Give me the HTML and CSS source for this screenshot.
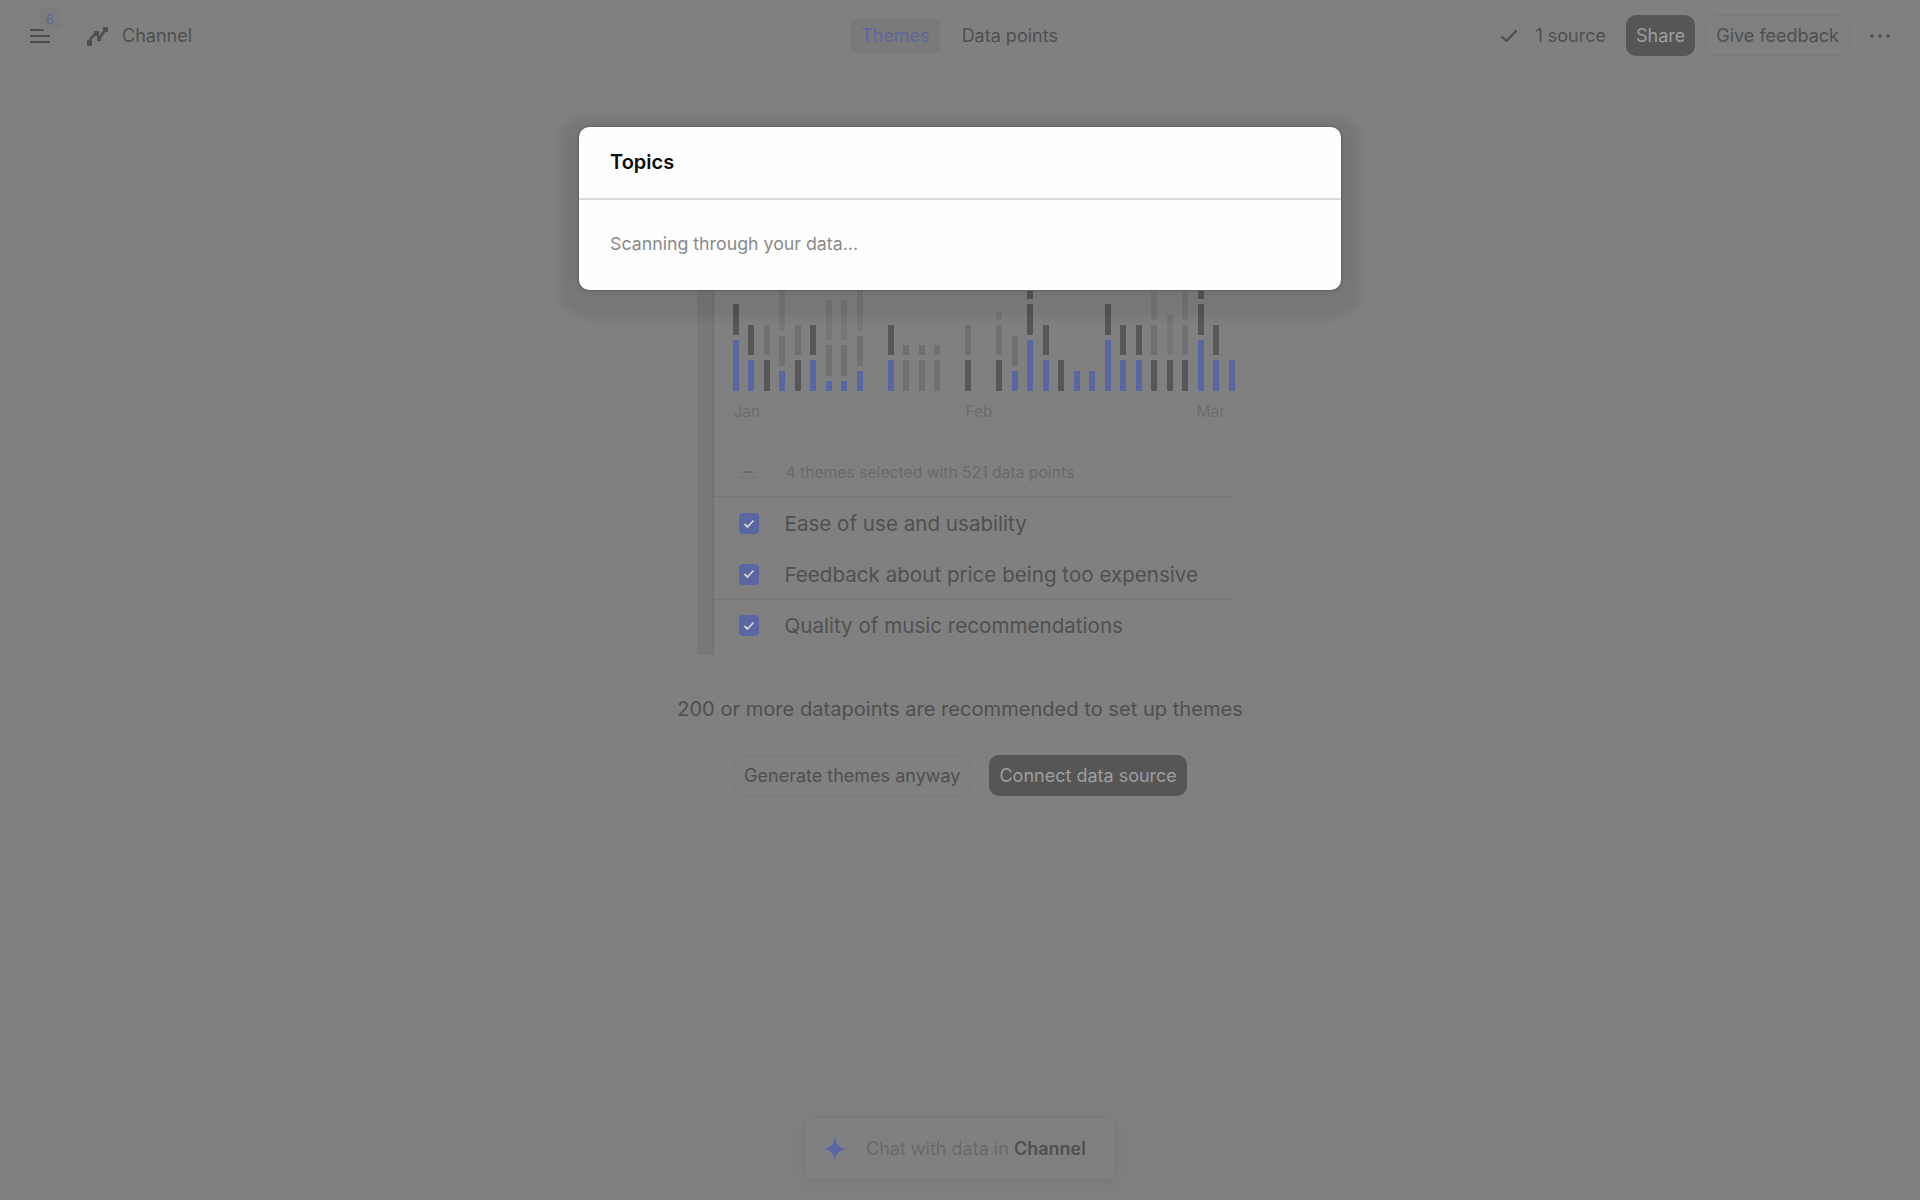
FILE: index.html
```html
<html>
<head>
<meta charset="utf-8">
<title>Channel</title>
<link rel="stylesheet" href="styles.css">
</head>
<body>
  <div class="page">
    <header class="topbar">
      <div class="bar-left">
        <span class="menu">
          <svg width="22" height="16" viewBox="0 0 22 16"><path d="M1 2h14M1 8h20M1 14h20" fill="none" stroke="#4d4d4d" stroke-width="2.2"/></svg>
          <span class="menu-badge">6</span>
        </span>
        <svg class="channel-icon" width="24" height="24" viewBox="0 0 24 24"><path d="M4 20 L6 14 L12 9 L14 15 L20 6" fill="none" stroke="#4f4f4f" stroke-width="2.6"/><path d="M2 16h5v6H2zM9 7h5v4H9zM12 13h4v4h-4zM18 3h5v5h-5z" fill="#4f4f4f"/></svg>
        <span class="channel-name">Channel</span>
      </div>
      <nav class="tabs">
        <span class="tab tab-active">Themes</span>
        <span class="tab">Data points</span>
      </nav>
      <div class="bar-right">
        <svg class="source-check" width="18" height="14" viewBox="0 0 18 14"><path d="M1.500 7.500 L6.500 12 L16.500 1.500" fill="none" stroke="#4f4f4f" stroke-width="2.2"/></svg>
        <span class="source-text">1 source</span>
        <span class="btn btn-dark btn-share">Share</span>
        <span class="btn btn-line btn-feedback">Give feedback</span>
        <svg class="dots" width="20" height="4" viewBox="0 0 20 4"><circle cx="2" cy="2" r="1.800" fill="#4f4f4f"/><circle cx="10" cy="2" r="1.800" fill="#4f4f4f"/><circle cx="18" cy="2" r="1.800" fill="#4f4f4f"/></svg>
      </div>
    </header>

    <main class="content">
      <section class="preview">
        <div class="chart">
          <div class="col"><i class="seg dark" style="height:31px"></i><i class="seg blue" style="height:51px"></i></div>
          <div class="col"><i class="seg dark" style="height:30px"></i><i class="seg blue" style="height:31px"></i></div>
          <div class="col"><i class="seg mid" style="height:30px"></i><i class="seg dark" style="height:31px"></i></div>
          <div class="col"><i class="seg light" style="height:42px"></i><i class="seg mid" style="height:30px"></i><i class="seg blue" style="height:20px"></i></div>
          <div class="col"><i class="seg mid" style="height:30px"></i><i class="seg dark" style="height:31px"></i></div>
          <div class="col"><i class="seg dark" style="height:30px"></i><i class="seg blue" style="height:31px"></i></div>
          <div class="col"><i class="seg light" style="height:40px"></i><i class="seg mid" style="height:31px"></i><i class="seg blue" style="height:10px"></i></div>
          <div class="col"><i class="seg light" style="height:40px"></i><i class="seg mid" style="height:31px"></i><i class="seg blue" style="height:10px"></i></div>
          <div class="col"><i class="seg light" style="height:42px"></i><i class="seg mid" style="height:30px"></i><i class="seg blue" style="height:20px"></i></div>
          <div class="col"></div>
          <div class="col"><i class="seg dark" style="height:30px"></i><i class="seg blue" style="height:31px"></i></div>
          <div class="col"><i class="seg mid" style="height:10px"></i><i class="seg mid" style="height:31px"></i></div>
          <div class="col"><i class="seg mid" style="height:10px"></i><i class="seg mid" style="height:31px"></i></div>
          <div class="col"><i class="seg mid" style="height:10px"></i><i class="seg mid" style="height:31px"></i></div>
          <div class="col"></div>
          <div class="col"><i class="seg mid" style="height:30px"></i><i class="seg dark" style="height:31px"></i></div>
          <div class="col"></div>
          <div class="col"><i class="seg light" style="height:9px"></i><i class="seg mid" style="height:30px"></i><i class="seg dark" style="height:31px"></i></div>
          <div class="col"><i class="seg mid" style="height:30px"></i><i class="seg blue" style="height:20px"></i></div>
          <div class="col"><i class="seg dark" style="height:8px"></i><i class="seg dark" style="height:31px"></i><i class="seg blue" style="height:51px"></i></div>
          <div class="col"><i class="seg dark" style="height:30px"></i><i class="seg blue" style="height:31px"></i></div>
          <div class="col"><i class="seg dark" style="height:31px"></i></div>
          <div class="col"><i class="seg blue" style="height:20px"></i></div>
          <div class="col"><i class="seg blue" style="height:20px"></i></div>
          <div class="col"><i class="seg dark" style="height:31px"></i><i class="seg blue" style="height:51px"></i></div>
          <div class="col"><i class="seg dark" style="height:30px"></i><i class="seg blue" style="height:31px"></i></div>
          <div class="col"><i class="seg dark" style="height:30px"></i><i class="seg blue" style="height:31px"></i></div>
          <div class="col"><i class="seg light" style="height:28px"></i><i class="seg mid" style="height:30px"></i><i class="seg dark" style="height:31px"></i></div>
          <div class="col"><i class="seg light" style="height:40px"></i><i class="seg dark" style="height:31px"></i></div>
          <div class="col"><i class="seg light" style="height:28px"></i><i class="seg mid" style="height:30px"></i><i class="seg dark" style="height:31px"></i></div>
          <div class="col"><i class="seg dark" style="height:8px"></i><i class="seg dark" style="height:31px"></i><i class="seg blue" style="height:51px"></i></div>
          <div class="col"><i class="seg dark" style="height:30px"></i><i class="seg blue" style="height:31px"></i></div>
          <div class="col"><i class="seg blue" style="height:31px"></i></div>
        </div>
        <div class="axis">
          <span>Jan</span>
          <span>Feb</span>
          <span>Mar</span>
        </div>
        <div class="summary">
          <span class="minus"></span>
          <span>4 themes selected with 521 data points</span>
        </div>
        <ul class="theme-list">
          <li class="theme">
            <span class="check"><svg width="12" height="10" viewBox="0 0 12 10"><path d="M1.500 5 L4.500 8 L10.500 1.500" fill="none" stroke="#d4d4d4" stroke-width="1.800"/></svg></span>
            Ease of use and usability
          </li>
          <li class="theme theme-ruled">
            <span class="check"><svg width="12" height="10" viewBox="0 0 12 10"><path d="M1.500 5 L4.500 8 L10.500 1.500" fill="none" stroke="#d4d4d4" stroke-width="1.800"/></svg></span>
            Feedback about price being too expensive
          </li>
          <li class="theme">
            <span class="check"><svg width="12" height="10" viewBox="0 0 12 10"><path d="M1.500 5 L4.500 8 L10.500 1.500" fill="none" stroke="#d4d4d4" stroke-width="1.800"/></svg></span>
            Quality of music recommendations
          </li>
        </ul>
      </section>

      <p class="notice">200 or more datapoints are recommended to set up themes</p>
      <div class="actions">
        <span class="btn btn-line">Generate themes anyway</span>
        <span class="btn btn-dark">Connect data source</span>
      </div>
    </main>

    <footer class="chat">
      <svg width="28" height="28" viewBox="0 0 28 28"><path d="M14 1 C15 10 18 13 27 14 C18 15 15 18 14 27 C13 18 10 15 1 14 C10 13 13 10 14 1 Z" fill="#5a66a8"/></svg>
      <span class="chat-text">Chat with data in <b>Channel</b></span>
    </footer>
  </div>

  <div class="modal">
    <div class="modal-head">Topics</div>
    <div class="modal-body">Scanning through your data...</div>
  </div>
</body>
</html>
```

FILE: styles.css
```css
* {
  box-sizing: border-box;
}

html, body {
  margin: 0;
  height: 100%;
}

body {
  background: #808080;
  color: #4f4f4f;
  font-family: Inter, "Liberation Sans", sans-serif;
  font-size: 18px;
  overflow: hidden;
}

.page {
  height: 1200px;
  display: flex;
  flex-direction: column;
}

/* top bar */
.topbar {
  height: 71px;
  display: grid;
  grid-template-columns: 1fr auto 1fr;
  align-items: center;
  padding: 0 30px 0 29px;
}

.bar-left {
  display: flex;
  align-items: center;
}

.menu {
  position: relative;
  display: flex;
  margin-top: 1px;
}

.menu-badge {
  position: absolute;
  top: -20px;
  left: 10px;
  width: 22px;
  height: 22px;
  text-align: center;
  font-size: 13px;
  line-height: 22px;
  color: #5f6499;
  background: #7c7c7c;
  border-radius: 6px;
}

.channel-icon {
  margin-left: 34px;
}

.channel-name {
  margin-left: 13px;
}

.tabs {
  display: flex;
  gap: 12px;
}

.tab {
  height: 38px;
  line-height: 38px;
  padding: 0 10px;
  border-radius: 8px;
}

.tab-active {
  background: #7a7a7a;
  color: #5f679f;
}

.bar-right {
  display: flex;
  align-items: center;
  justify-content: flex-end;
}

.source-text {
  margin-left: 17px;
  margin-right: 20px;
}

.btn {
  display: inline-block;
  height: 41px;
  line-height: 41px;
  padding: 0 10px;
  border-radius: 10px;
  white-space: nowrap;
}

.btn-dark {
  background: #565656;
  color: #9e9e9e;
}

.btn-line {
  border: 1px solid #7a7a7a;
  line-height: 39px;
}

.btn-feedback {
  margin-left: 10px;
}

.dots {
  margin-left: 20px;
}

/* chart and theme list behind the dialog */
.content {
  display: flex;
  flex-direction: column;
  align-items: center;
}

.preview {
  width: 521px;
  margin-top: 209px;
  margin-left: 26px;
  height: 375px;
  border-left: 1px solid #6e6e6e;
  box-shadow: -16px 0 0 #787878;
  background: #808080;
}

.chart {
  height: 111px;
  display: flex;
  align-items: flex-end;
  gap: 9.5px;
  padding-left: 19px;
}

.col {
  width: 6px;
  flex: none;
  display: flex;
  flex-direction: column;
  justify-content: flex-end;
  gap: 5px;
}

.seg {
  display: block;
}

.seg.blue {
  background: #5a669f;
}

.seg.dark {
  background: #575757;
}

.seg.mid {
  background: #707070;
}

.seg.light {
  background: #797573;
}

.axis {
  display: grid;
  grid-template-columns: 232px 231px auto;
  padding-left: 20px;
  margin-top: 12px;
  font-size: 15.5px;
  line-height: 18px;
  color: #6c6c6c;
}

.summary {
  height: 49px;
  margin-top: 27px;
  display: flex;
  align-items: center;
  gap: 28px;
  padding-left: 24px;
  font-size: 15.7px;
  color: #6a6a6a;
  border-bottom: 1px solid #777;
}

.minus {
  width: 20px;
  height: 2px;
  padding: 0 5px;
  background: #6a6a6a;
  background-clip: content-box;
  box-shadow: 0 6px 0 #7b7b7b;
}

.theme-list {
  list-style: none;
  margin: 1px 0 0;
  padding: 0;
}

.theme {
  height: 51px;
  display: flex;
  align-items: center;
  gap: 26px;
  padding-left: 25px;
  font-size: 20.6px;
  color: #505050;
}

.theme-ruled {
  border-bottom: 1px solid #777;
}

.check {
  width: 20px;
  height: 21px;
  display: flex;
  align-items: center;
  justify-content: center;
  background: #5a66a2;
  border-radius: 4px;
}

.notice {
  margin: 0;
  margin-top: 40px;
  font-size: 20.1px;
  line-height: 28px;
  color: #4f4f4f;
}

.actions {
  display: flex;
  align-items: center;
  gap: 18px;
  margin-top: 32px;
}

/* chat box */
.chat {
  margin: auto auto 20px;
  width: 312px;
  height: 63px;
  display: flex;
  align-items: center;
  gap: 17px;
  padding-left: 16px;
  border: 1px solid #797979;
  border-radius: 10px;
  box-shadow: 0 4px 12px 4px rgba(0, 0, 0, .04);
}

.chat-text {
  color: #696969;
}

.chat-text b {
  font-weight: 600;
  color: #4f4f4f;
}

/* dialog */
.modal {
  position: absolute;
  top: 127px;
  left: 579px;
  width: 762px;
  height: 163px;
  background: #fdfdfd;
  border-radius: 10px;
  box-shadow: 0 0 2px rgba(0, 0, 0, .5), 0 2px 6px 3px rgba(0, 0, 0, .03), 0 8px 10px 20px rgba(0, 0, 0, .07);
}

.modal-head {
  height: 73px;
  line-height: 71px;
  padding-left: 31px;
  font-size: 20px;
  font-weight: 600;
  color: #0d0d0d;
  border-bottom: 2px solid #dcdcdc;
}

.modal-body {
  padding: 31px 31px;
  line-height: 26px;
  font-size: 17.75px;
  color: #8a8a8a;
}
```
